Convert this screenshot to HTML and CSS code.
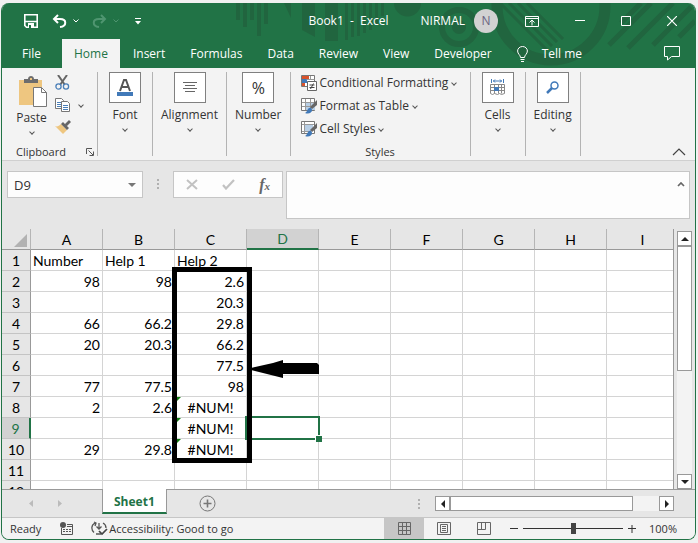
FILE: index.html
```html
<!DOCTYPE html>
<html lang="en">

<head>
    <meta charset="utf-8">
    <title>Book1 - Excel</title>
    <link rel="stylesheet" href="styles.css">
</head>

<body>
    <div class="window">
        <header class="header">
            <svg class="pattern" viewBox="0 0 694 65" width="694" height="65" aria-hidden="true">
                <g fill="#21653f">
                    <path d="M235 0h4v17h-4zM242 0h4v24h-4zM249 0h4v17h-4zM256 0h4v33h-4zM263 0h4v21h-4z" />
                    <path d="M283 0h7v15zM301 0h13v34l-13-7zM324 0h13v38h-13z" />
                    <path d="M344 0h3v37h-3zM350 0h3v34h-3zM356 0h3v33h-3zM362 0h3v30h-3zM368 0h3v27h-3zM374 0h3v21h-3zM380 0h3v13h-3z" />
                    <path d="M393 0h27a13.500 13.500 0 0 1-27 0z" />
                    <circle cx="458" cy="24" r="7" />
                </g>
                <g fill="none" stroke="#21653f">
                    <circle cx="458" cy="24" r="17" stroke-width="6" />
                    <circle cx="550" cy="3" r="54" stroke-width="11" />
                    <path d="M499 0l47 47M508 0l43 43M517 0l39 39M526 0l36 36" stroke-width="3" />
                    <path d="M640 0l-20 20M650 0l-42 42M672 0l-45 45M690 4l-38 38M694 18l-16 16" stroke-width="5" />
                </g>
            </svg>
            <div class="titlebar">
                <div class="quick">
                    <button class="icon-btn save" aria-label="Save">
                        <svg width="14" height="14" viewBox="0 0 14 14"><path d="M.8.800h12.400v12.400H2.500L.8 11.500zM1 7.500h12" fill="none" stroke="#fff" stroke-width="1.600" /><path d="M4 9h6v5H4z" fill="#fff" /><path d="M5 11h2v3H5z" fill="#217346" /></svg>
                    </button>
                    <button class="icon-btn undo" aria-label="Undo">
                        <svg width="15" height="14" viewBox="0 0 15 14"><path d="M6 1L2 5l4 4M2 5h6c7 0 7 7 0 8" fill="none" stroke="#fff" stroke-width="2" /></svg>
                    </button>
                    <button class="icon-btn quick-arrow" aria-label="Undo list">
                        <svg width="6" height="4" viewBox="0 0 6 4"><path d="M.5.500L3 3 5.500.500" fill="none" stroke="#fff" /></svg>
                    </button>
                    <button class="icon-btn redo" aria-label="Redo">
                        <svg width="15" height="14" viewBox="0 0 15 14"><path d="M9 1l4 4-4 4M13 5H7C0 5 0 12 7 13" fill="none" stroke="#4f9570" stroke-width="2" /></svg>
                    </button>
                    <button class="icon-btn quick-arrow" aria-label="Redo list">
                        <svg width="6" height="4" viewBox="0 0 6 4"><path d="M.5.500L3 3 5.500.500" fill="none" stroke="#4f9570" /></svg>
                    </button>
                    <button class="icon-btn customize" aria-label="Customize Quick Access Toolbar">
                        <svg width="6" height="7" viewBox="0 0 6 7"><path d="M0 0h6v1H0zM0 3h6L3 6.500z" fill="#fff" /></svg>
                    </button>
                </div>
                <div class="title">Book1&nbsp; -&nbsp; Excel</div>
                <div class="account">NIRMAL <span class="avatar">N</span></div>
                <div class="win-buttons">
                    <button class="icon-btn" aria-label="Ribbon Display Options">
                        <svg width="14" height="11" viewBox="0 0 14 11"><path d="M.5.500h13v10H.5zM.5 2.500h13M7 9.500V4M4.500 6.500L7 4l2.500 2.500" fill="none" stroke="#fff" /></svg>
                    </button>
                    <button class="icon-btn" aria-label="Minimize">
                        <svg width="10" height="10" viewBox="0 0 10 10"><path d="M0 4.500h10" stroke="#fff" /></svg>
                    </button>
                    <button class="icon-btn" aria-label="Maximize">
                        <svg width="10" height="10" viewBox="0 0 10 10"><path d="M.5.500h9v9h-9z" fill="none" stroke="#fff" /></svg>
                    </button>
                    <button class="icon-btn" aria-label="Close">
                        <svg width="10" height="10" viewBox="0 0 10 10"><path d="M0 0l10 10M10 0L0 10" stroke="#fff" stroke-width="1.200" /></svg>
                    </button>
                </div>
            </div>
            <nav class="tabs">
                <a href="#" class="file">File</a>
                <a href="#" class="active">Home</a>
                <a href="#">Insert</a>
                <a href="#">Formulas</a>
                <a href="#">Data</a>
                <a href="#">Review</a>
                <a href="#">View</a>
                <a href="#">Developer</a>
                <a href="#" class="tell">
                    <svg width="11" height="16" viewBox="0 0 11 16"><path d="M3.500 11.500C3.500 9 .6 8 .6 5a4.900 4.500 0 0 1 9.800 0c0 3-2.900 4-2.900 6.500zM3.500 13.500h4M4 15.500h3" fill="none" stroke="#fff" /></svg>
                    Tell me
                </a>
                <button class="icon-btn comment" aria-label="Comments">
                    <svg width="16" height="15" viewBox="0 0 16 15"><path d="M.5.500h15v10H7.500L3.500 14v-3.500h-3z" fill="none" stroke="#fff" /></svg>
                </button>
            </nav>
        </header>

        <section class="ribbon">
            <div class="group clipboard">
                <div class="clip-tools">
                    <button class="big-btn paste">
                        <svg width="29" height="31" viewBox="0 0 29 31"><path d="M1 4h23v25H1z" fill="#eec680" /><path d="M6 7V3h4c0-4 6-4 6 0h4v4z" fill="#6d6d6d" /><path d="M12 2h2v2h-2z" fill="#eec680" /><path d="M15.500 11.500h8l5 5v14h-13z" fill="#fff" stroke="#777" /><path d="M23.500 11.500v5h5" fill="none" stroke="#777" /></svg>
                        <span>Paste</span>
                        <i class="chev"></i>
                    </button>
                    <div class="clip-small">
                        <button class="icon-btn" aria-label="Cut">
                            <svg width="15" height="15" viewBox="0 0 15 15"><path d="M3 0l7 10M12 0L5 10" fill="none" stroke="#666" stroke-width="2" /><g fill="#f3f3f3" stroke="#4a7fb8" stroke-width="1.300"><circle cx="3.500" cy="11.500" r="2.600" /><circle cx="11" cy="11.500" r="2.600" /></g></svg>
                        </button>
                        <button class="icon-btn" aria-label="Copy">
                            <svg width="15" height="14" viewBox="0 0 15 14"><path d="M.5.500h6l2 2v8h-8z" fill="#fff" stroke="#777" /><path d="M2 4.500h4M2 6.500h4M2 8.500h4" stroke="#4a7fb8" /><path d="M6.500 3.500h6l2 2v8h-8z" fill="#fff" stroke="#777" /><path d="M8 7.500h5M8 9.500h5M8 11.500h5" stroke="#4a7fb8" /></svg>
                            <i class="chev"></i>
                        </button>
                        <button class="icon-btn" aria-label="Format Painter">
                            <svg width="16" height="14" viewBox="0 0 16 14"><path d="M6 4l6 6-4 4-8-8c2 1 4 0 6-2z" fill="#eec680" /><path d="M6 4l2-2 6 6-2 2zM10 4l4-4 2 2-4 4z" fill="#666" /></svg>
                        </button>
                    </div>
                </div>
                <div class="group-name">Clipboard
                    <button class="icon-btn launcher" aria-label="Clipboard settings">
                        <svg width="8" height="8" viewBox="0 0 8 8"><path d="M.5 6V.500H6M2.500 2.500L7 7M7.500 3.500v4h-4" fill="none" stroke="#555" /></svg>
                    </button>
                </div>
            </div>
            <div class="group">
                <button class="big-btn">
                    <span class="tile"><svg width="18" height="18" viewBox="0 0 18 18"><path d="M4 12L8 1h2l4 11M5.500 8h7" fill="none" stroke="#555" stroke-width="2" /><path d="M1 13h16v4H1z" fill="#4179b8" /></svg></span>
                    <span>Font</span>
                    <i class="chev"></i>
                </button>
            </div>
            <div class="group">
                <button class="big-btn">
                    <span class="tile"><svg width="14" height="11" viewBox="0 0 14 11"><path d="M0 .500h14M2 3.500h10M0 6.500h14M2 9.500h10" stroke="#666" /></svg></span>
                    <span>Alignment</span>
                    <i class="chev"></i>
                </button>
            </div>
            <div class="group">
                <button class="big-btn">
                    <span class="tile percent">%</span>
                    <span>Number</span>
                    <i class="chev"></i>
                </button>
            </div>
            <div class="group styles">
                <div class="style-list">
                    <button class="row-btn">
                        <svg width="16" height="16" viewBox="0 0 16 16"><path d="M.5.500h13v11H.5z" fill="#fff" stroke="#777" /><path d="M1 1h7v3H1zM1 8h3v3H1z" fill="#d9532c" /><path d="M1 4h5v4H1z" fill="#4179b8" /><path d="M9.500 1v3M5.500 4.500h8" stroke="#999" /><path d="M6.500 6.500h9v9h-9z" fill="#fff" stroke="#666" /><path d="M8.500 10h5M8.500 12.500h5M12.500 8.500l-3 5.500" stroke="#444" /></svg>
                        Conditional Formatting <i class="chev"></i>
                    </button>
                    <button class="row-btn">
                        <svg width="16" height="16" viewBox="0 0 16 16"><path d="M.5.500h13v12H.5z" fill="#fff" stroke="#777" /><path d="M5 5h9v7H5z" fill="#b8cfe6" /><path d="M4.500 1v11M9.500 1v11M1 4.500h12M1 8.500h12" stroke="#999" /><path d="M16 2v5l-5 4-2-2z" fill="#666" /><path d="M4 15c3-1 2-6 6-5 3 3-1 7-6 5z" fill="#4179b8" /></svg>
                        Format as Table <i class="chev"></i>
                    </button>
                    <button class="row-btn">
                        <svg width="16" height="16" viewBox="0 0 16 16"><path d="M.5.500h13v12H.5z" fill="#fff" stroke="#777" /><path d="M4 4h8v6H4z" fill="#b8cfe6" /><path d="M3.500 1v11M1 3.500h12M1 10.500h8" stroke="#999" /><path d="M16 2v5l-5 4-2-2z" fill="#666" /><path d="M4 15c3-1 2-6 6-5 3 3-1 7-6 5z" fill="#4179b8" /></svg>
                        Cell Styles <i class="chev"></i>
                    </button>
                </div>
                <div class="group-name">Styles</div>
            </div>
            <div class="group">
                <button class="big-btn">
                    <span class="tile"><svg width="16" height="17" viewBox="0 0 16 17"><path d="M1.500 0v4M13.500 0v4M3 2h9M5 .500L3.500 2 5 3.500M10 .500L11.500 2 10 3.500" fill="none" stroke="#4179b8" /><path d="M.5 5.500h14v9l-3 1-2-1-2 1-3-1-2 1-2-1zM.5 8.500h14M.5 11.500h14M4.500 5.500v9M8.500 5.500v9M11.500 5.500v9" fill="none" stroke="#888" /><path d="M4 8h5v4H4z" fill="#4179b8" /></svg></span>
                    <span>Cells</span>
                    <i class="chev"></i>
                </button>
            </div>
            <div class="group">
                <button class="big-btn">
                    <span class="tile"><svg width="14" height="13" viewBox="0 0 14 13"><circle cx="8.500" cy="4.500" r="3.500" fill="none" stroke="#4179b8" stroke-width="1.500" /><path d="M6 7l-5 5" stroke="#4179b8" stroke-width="2.500" /></svg></span>
                    <span>Editing</span>
                    <i class="chev"></i>
                </button>
            </div>
            <button class="icon-btn collapse" aria-label="Collapse the Ribbon">
                <svg width="14" height="8" viewBox="0 0 14 8"><path d="M1 7l6-6 6 6" fill="none" stroke="#444" stroke-width="1.200" /></svg>
            </button>
        </section>

        <section class="formula-bar">
            <div class="name-box">
                <input type="text" value="D9" aria-label="Name Box">
                <button class="icon-btn" aria-label="Name list">
                    <svg width="8" height="4" viewBox="0 0 8 4"><path d="M0 0h8L4 4z" fill="#777" /></svg>
                </button>
            </div>
            <i class="dots"></i>
            <div class="fx-box">
                <button class="icon-btn" aria-label="Cancel">
                    <svg width="12" height="11" viewBox="0 0 12 11"><path d="M1 1l10 9M11 1L1 10" stroke="#c2c2c2" stroke-width="2" /></svg>
                </button>
                <button class="icon-btn" aria-label="Enter">
                    <svg width="13" height="11" viewBox="0 0 13 11"><path d="M1 6l3 3.500L12 1" fill="none" stroke="#c2c2c2" stroke-width="2.200" /></svg>
                </button>
                <button class="fx" aria-label="Insert Function">f<small>x</small></button>
            </div>
            <div class="formula">
                <textarea aria-label="Formula Bar"></textarea>
                <button class="icon-btn" aria-label="Collapse Formula Bar">
                    <svg width="8" height="5" viewBox="0 0 8 5"><path d="M1 4l3-3 3 3" fill="none" stroke="#666" stroke-width="1.700" /></svg>
                </button>
            </div>
        </section>

        <main class="sheet">
            <div class="grid">
                <table>
                    <thead>
                        <tr><th class="corner"><svg width="13" height="13" viewBox="0 0 13 13"><path d="M13 0v13H0z" fill="#b2b2b2" /></svg></th><th>A</th><th>B</th><th>C</th><th class="on">D</th><th>E</th><th>F</th><th>G</th><th>H</th><th>I</th></tr>
                    </thead>
                    <tbody>
                        <tr class="labels"><th>1</th><td>Number</td><td>Help 1</td><td>Help 2</td><td></td><td></td><td></td><td></td><td></td><td></td></tr>
                        <tr><th>2</th><td>98</td><td>98</td><td>2.6</td><td></td><td></td><td></td><td></td><td></td><td></td></tr>
                        <tr><th>3</th><td></td><td></td><td>20.3</td><td></td><td></td><td></td><td></td><td></td><td></td></tr>
                        <tr><th>4</th><td>66</td><td>66.2</td><td>29.8</td><td></td><td></td><td></td><td></td><td></td><td></td></tr>
                        <tr><th>5</th><td>20</td><td>20.3</td><td>66.2</td><td></td><td></td><td></td><td></td><td></td><td></td></tr>
                        <tr><th>6</th><td></td><td></td><td>77.5</td><td></td><td></td><td></td><td></td><td></td><td></td></tr>
                        <tr><th>7</th><td>77</td><td>77.5</td><td>98</td><td></td><td></td><td></td><td></td><td></td><td></td></tr>
                        <tr><th>8</th><td>2</td><td>2.6</td><td class="error">#NUM!</td><td></td><td></td><td></td><td></td><td></td><td></td></tr>
                        <tr><th class="on">9</th><td></td><td></td><td class="error">#NUM!</td><td class="selected"></td><td></td><td></td><td></td><td></td><td></td></tr>
                        <tr><th>10</th><td>29</td><td>29.8</td><td class="error">#NUM!</td><td></td><td></td><td></td><td></td><td></td><td></td></tr>
                        <tr><th>11</th><td></td><td></td><td></td><td></td><td></td><td></td><td></td><td></td><td></td></tr>
                        <tr><th>12</th><td></td><td></td><td></td><td></td><td></td><td></td><td></td><td></td><td></td></tr>
                    </tbody>
                </table>
                <!-- ink drawn over the Help 2 values -->
                <svg class="ink" width="150" height="197" viewBox="0 0 150 197" aria-hidden="true">
                    <path d="M2.500 2.500h75v191h-75z" fill="none" stroke="#000" stroke-width="5" />
                    <path d="M79 101l22-5 10-3v3h34l2 2v9h-36v4l-12-3-20-5z" />
                </svg>
            </div>
            <div class="vscroll">
                <button aria-label="Scroll up"><svg width="8" height="4" viewBox="0 0 8 4"><path d="M0 4h8L4 0z" fill="#222" /></svg></button>
                <div class="thumb"></div>
                <button aria-label="Scroll down"><svg width="8" height="4" viewBox="0 0 8 4"><path d="M0 0h8L4 4z" fill="#222" /></svg></button>
            </div>
        </main>

        <div class="sheet-tabs">
            <div class="sheet-nav">
                <button class="icon-btn" aria-label="Previous sheet"><svg width="4" height="7" viewBox="0 0 4 7"><path d="M4 0v7L0 3.500z" fill="#bbb" /></svg></button>
                <button class="icon-btn" aria-label="Next sheet"><svg width="4" height="7" viewBox="0 0 4 7"><path d="M0 0v7l4-3.500z" fill="#bbb" /></svg></button>
            </div>
            <a href="#" class="sheet-tab">Sheet1</a>
            <button class="icon-btn add" aria-label="New sheet">
                <svg width="17" height="17" viewBox="0 0 17 17"><circle cx="8.500" cy="8.500" r="7.500" fill="none" stroke="#777" /><path d="M8.500 4.500v8M4.500 8.500h8" stroke="#777" stroke-width="1.600" /></svg>
            </button>
            <i class="dots"></i>
            <div class="hscroll">
                <button aria-label="Scroll left"><svg width="4" height="8" viewBox="0 0 4 8"><path d="M4 0v8L0 4z" fill="#222" /></svg></button>
                <div class="thumb"></div>
                <button aria-label="Scroll right"><svg width="4" height="8" viewBox="0 0 4 8"><path d="M0 0v8l4-4z" fill="#222" /></svg></button>
            </div>
        </div>

        <footer class="status">
            <span>Ready</span>
            <button class="icon-btn macro" aria-label="Record Macro">
                <svg width="13" height="13" viewBox="0 0 13 13"><path d="M1.500 6v6.500h11v-10H7" fill="none" stroke="#555" /><circle cx="3" cy="3" r="3" fill="#555" /><path d="M7 4.500h5M3 7.500h2M6 7.500h2M9 7.500h2M3 9.500h2M6 9.500h2M9 9.500h2" stroke="#555" /></svg>
            </button>
            <button class="access">
                <svg width="17" height="15" viewBox="0 0 17 15"><path d="M4 2C0 4 0 9 3 11.500M12 2c2 1 3 3 3 5M3 1l2 1-1 3M5 13h5M8 2v6M5.500 5.500L8 8l2.500-2.500" fill="none" stroke="#555" stroke-width="1.300" /><path d="M8 10l3 3 5-5" fill="none" stroke="#444" stroke-width="1.700" /></svg>
                Accessibility: Good to go
            </button>
            <div class="views">
                <button class="active" aria-label="Normal"><svg width="13" height="13" viewBox="0 0 13 13"><path d="M.5.500h12v12H.5zM4.500 0v13M8.500 0v13M0 4.500h13M0 8.500h13" fill="none" stroke="#666" /></svg></button>
                <button aria-label="Page Layout"><svg width="14" height="13" viewBox="0 0 14 13"><path d="M.5.500h13v12H.5zM3.500 2.500h7v8h-7zM5 4.500h4M5 6.500h4M5 8.500h4" fill="none" stroke="#666" /></svg></button>
                <button aria-label="Page Break Preview"><svg width="14" height="13" viewBox="0 0 14 13"><path d="M.5.500h13v12H.5zM.5 7.500h8M4.500 0v7.500M8.500 0v7.500" fill="none" stroke="#666" /></svg></button>
            </div>
            <div class="zoom">
                <button class="icon-btn" aria-label="Zoom out"><svg width="8" height="8" viewBox="0 0 8 8"><path d="M0 3.500h8" stroke="#333" /></svg></button>
                <input type="range" min="0" max="200" value="100" aria-label="Zoom">
                <button class="icon-btn" aria-label="Zoom in"><svg width="8" height="8" viewBox="0 0 8 8"><path d="M0 3.500h8M4 0v8" stroke="#333" /></svg></button>
                <span>100%</span>
            </div>
        </footer>
    </div>
</body>

</html>
```
FILE: styles.css
```css
* {
    box-sizing: border-box;
}

body {
    margin: 0;
    padding: 3px 2px 3px 1px;
    height: 100vh;
    background: #f1f1f1;
    font-family: "Open Sans", "Noto Sans", sans-serif;
    font-size: 12px;
    line-height: 16px;
    color: #333333;
}

button,
input,
textarea {
    font: inherit;
    color: inherit;
    padding: 0;
    border: none;
    background: none;
    border-radius: 0;
}

a {
    color: inherit;
    text-decoration: none;
}

svg {
    display: block;
    flex: none;
}

.window {
    display: flex;
    flex-direction: column;
    height: 100%;
    border: 1px solid #217346;
    border-top: none;
    border-radius: 8px;
    overflow: hidden;
    background: #e6e6e6;
}

.icon-btn {
    display: flex;
    align-items: center;
    flex: none;
}

/* title and tabs */
.header {
    position: relative;
    background: #217346;
    color: #ffffff;
}

.pattern {
    position: absolute;
    top: 0;
    right: 0;
}

.titlebar {
    position: relative;
    display: flex;
    align-items: center;
    height: 36px;
    padding: 0 18px 0 22px;
}

.quick {
    display: flex;
    align-items: center;
    flex: 1;
}

.save {
    margin-right: 14px;
}

.undo,
.redo {
    margin-right: 6px;
}

.quick-arrow {
    margin-right: 13px;
}

.customize {
    margin-left: 3px;
}

.title {
    margin-right: 32px;
}

.account {
    display: flex;
    align-items: center;
    gap: 9px;
    margin-right: 27px;
}

.avatar {
    width: 24px;
    height: 24px;
    border-radius: 50%;
    background: #d2d2d2;
    color: #6a6480;
    text-align: center;
    line-height: 24px;
}

.win-buttons {
    display: flex;
    align-items: center;
    gap: 36px;
}

.tabs {
    position: relative;
    display: flex;
    gap: 1px;
    height: 29px;
}

.tabs a {
    padding: 0 12px;
    line-height: 29px;
}

.tabs .file {
    padding: 0 20px;
}

.tabs .active {
    background: #f3f3f3;
    color: #217346;
}

.tabs .tell {
    display: flex;
    align-items: center;
    gap: 14px;
}

.comment {
    margin-left: auto;
    margin-right: 15px;
}

/* ribbon */
.ribbon {
    display: flex;
    height: 93px;
    padding: 4px 0;
    background: #f3f3f3;
    border-bottom: 1px solid #d0d0d0;
}

.group {
    display: flex;
    flex-direction: column;
    align-items: center;
    flex: none;
    min-width: 55px;
    padding: 0 8px;
    border-right: 1px solid #b3b3b3;
}

.chev {
    display: block;
    width: 4px;
    height: 4px;
    margin: 0 1px;
    border: solid #555555;
    border-width: 0 1px 1px 0;
    transform: rotate(45deg);
}

.big-btn {
    display: flex;
    flex-direction: column;
    align-items: center;
}

.tile {
    display: flex;
    align-items: center;
    justify-content: center;
    width: 32px;
    height: 31px;
    margin-bottom: 4px;
    border: 1px solid #808080;
    background: #ffffff;
}

.percent {
    font-size: 16px;
}

.big-btn .chev {
    margin-top: 4px;
}

.clipboard {
    width: 96px;
    padding: 0;
}

.clip-tools {
    display: flex;
    gap: 8px;
    width: 100%;
    padding-left: 14px;
}

.paste svg {
    margin: 4px 0 3px 2px;
}

.clip-small {
    display: flex;
    flex-direction: column;
    gap: 8px;
    padding-top: 3px;
}

.clip-small .icon-btn {
    gap: 8px;
}

.group-name {
    display: flex;
    align-items: center;
    justify-content: center;
    margin-top: auto;
    margin-bottom: -2px;
    font-size: 11px;
    line-height: 12px;
}

.clipboard .group-name {
    align-self: stretch;
    justify-content: space-between;
    padding: 0 3px 0 14px;
}

.styles {
    width: 180px;
    padding: 0 10px;
}

.style-list {
    align-self: stretch;
    display: flex;
    flex-direction: column;
    gap: 7px;
    padding-top: 3px;
}

.row-btn {
    display: flex;
    align-items: center;
    gap: 3px;
    white-space: nowrap;
}

.collapse {
    margin: auto 9px 0 auto;
}

/* formula bar */
.formula-bar {
    display: flex;
    align-items: flex-start;
    padding: 10px 5px;
}

.name-box,
.fx-box,
.formula {
    display: flex;
    background: #fdfdfd;
    border: 1px solid #c6c6c6;
}

.name-box {
    width: 136px;
    height: 27px;
    padding: 0 6px;
}

.name-box input {
    flex: 1;
    min-width: 0;
    font-size: 13px;
}

.dots {
    width: 2px;
    height: 10px;
    background: repeating-linear-gradient(#b0b0b0 0 2px, transparent 2px 4px);
}

.formula-bar .dots {
    margin: 8px 14px;
}

.fx-box {
    width: 110px;
    height: 27px;
    justify-content: space-between;
    padding: 0 12px;
    margin-right: 3px;
}

.fx {
    font: italic bold 16px "Liberation Serif", serif;
    color: #666666;
}

.fx small {
    font-size: 11px;
}

.formula {
    flex: 1;
    height: 48px;
}

.formula textarea {
    flex: 1;
    min-width: 0;
    resize: none;
}

.formula .icon-btn {
    height: 24px;
    margin-right: 4px;
}

/* sheet */
.sheet {
    flex: 1;
    display: flex;
    min-height: 0;
    padding-right: 3px;
}

.grid {
    position: relative;
    flex: 1;
    min-width: 0;
    overflow: hidden;
    border-right: 1px solid #999999;
}

table {
    width: 677px;
    table-layout: fixed;
    border-collapse: separate;
    border-spacing: 0;
    font-family: Lato, sans-serif;
    font-size: 14px;
    line-height: 18px;
    color: #000000;
}

th {
    height: 21px;
    padding: 2px 0 0;
    font-weight: normal;
    background: #e6e6e6;
    border-right: 1px solid #b5b5b5;
    border-bottom: 1px solid #999999;
}

.corner {
    width: 29px;
}

.corner svg {
    margin-left: 12px;
}

tbody th {
    border-right-color: #999999;
    border-bottom-color: #c4c4c4;
}

th.on {
    background: #d2d2d2;
    color: #217346;
}

thead .on {
    border-bottom: 2px solid #217346;
    padding-top: 1px;
}

tbody .on {
    border-right: 2px solid #217346;
}

td {
    position: relative;
    height: 21px;
    padding: 2px 2px 0;
    text-align: right;
    background: #ffffff;
    border-right: 1px solid #d4d4d4;
    border-bottom: 1px solid #d4d4d4;
}

.labels td {
    text-align: left;
}

td.error {
    text-align: center;
}

.error::before {
    content: "";
    position: absolute;
    top: 0;
    left: 0;
    border-top: 6px solid #107c10;
    border-right: 6px solid transparent;
}

.selected::before {
    content: "";
    position: absolute;
    inset: -2px;
    border: 2px solid #217346;
}

.selected::after {
    content: "";
    position: absolute;
    right: -4px;
    bottom: -4px;
    width: 6px;
    height: 6px;
    background: #217346;
    border: solid #ffffff;
    border-width: 1px 0 0 1px;
}

/* neighbours must not paint over the selection frame */
.selected {
    z-index: 1;
}

.ink {
    position: absolute;
    z-index: 2;
    top: 38px;
    left: 170px;
}

.vscroll,
.hscroll {
    display: flex;
    background: #f3f3f3;
}

.vscroll {
    flex-direction: column;
    width: 15px;
    margin: 2px 0 0 3px;
}

.vscroll button,
.hscroll button {
    display: flex;
    align-items: center;
    justify-content: center;
    flex: none;
    width: 15px;
    height: 15px;
    background: #ffffff;
    border: 1px solid #999999;
}

.thumb {
    background: #ffffff;
    border: 1px solid #999999;
}

.vscroll .thumb {
    height: 125px;
    margin-bottom: auto;
}

/* sheet tabs */
.sheet-tabs {
    display: flex;
    align-items: center;
    height: 28px;
    padding-right: 21px;
    border-top: 1px solid #999999;
}

.sheet-nav {
    display: flex;
    gap: 25px;
    width: 100px;
    padding-left: 27px;
}

.sheet-tab {
    align-self: flex-start;
    height: 25px;
    margin-top: -1px;
    padding: 0 11px;
    font-weight: bold;
    line-height: 26px;
    color: #217346;
    background: #ffffff;
    border: 1px solid #999999;
    border-top: none;
    border-bottom: 2px solid #217346;
}

.add {
    margin-left: 32px;
}

.sheet-tabs .dots {
    margin: 0 15px 0 auto;
}

.hscroll {
    width: 239px;
}

.hscroll .thumb {
    width: 183px;
    margin-right: auto;
}

/* status bar */
.status {
    display: flex;
    align-items: center;
    height: 22px;
    padding: 0 18px 0 8px;
    background: #f3f3f3;
    border-top: 1px solid #c6c6c6;
    font-size: 11px;
}

.macro {
    margin: 0 18px 0 19px;
}

.access {
    display: flex;
    align-items: center;
    gap: 1px;
    white-space: nowrap;
}

.views {
    display: flex;
    align-self: stretch;
    margin-left: auto;
}

.views button {
    display: flex;
    align-items: center;
    justify-content: center;
    width: 40px;
}

.views .active {
    background: #c6c6c6;
}

.zoom {
    display: flex;
    align-items: center;
    gap: 5px;
    margin-left: 6px;
}

.zoom span {
    margin-left: 8px;
}

.zoom input {
    appearance: none;
    width: 100px;
    height: 12px;
    margin: 0;
    background: linear-gradient(#333333, #333333) center / 100% 1px no-repeat;
}

.zoom input::-webkit-slider-thumb {
    appearance: none;
    width: 5px;
    height: 11px;
    background: #444444;
}
```
